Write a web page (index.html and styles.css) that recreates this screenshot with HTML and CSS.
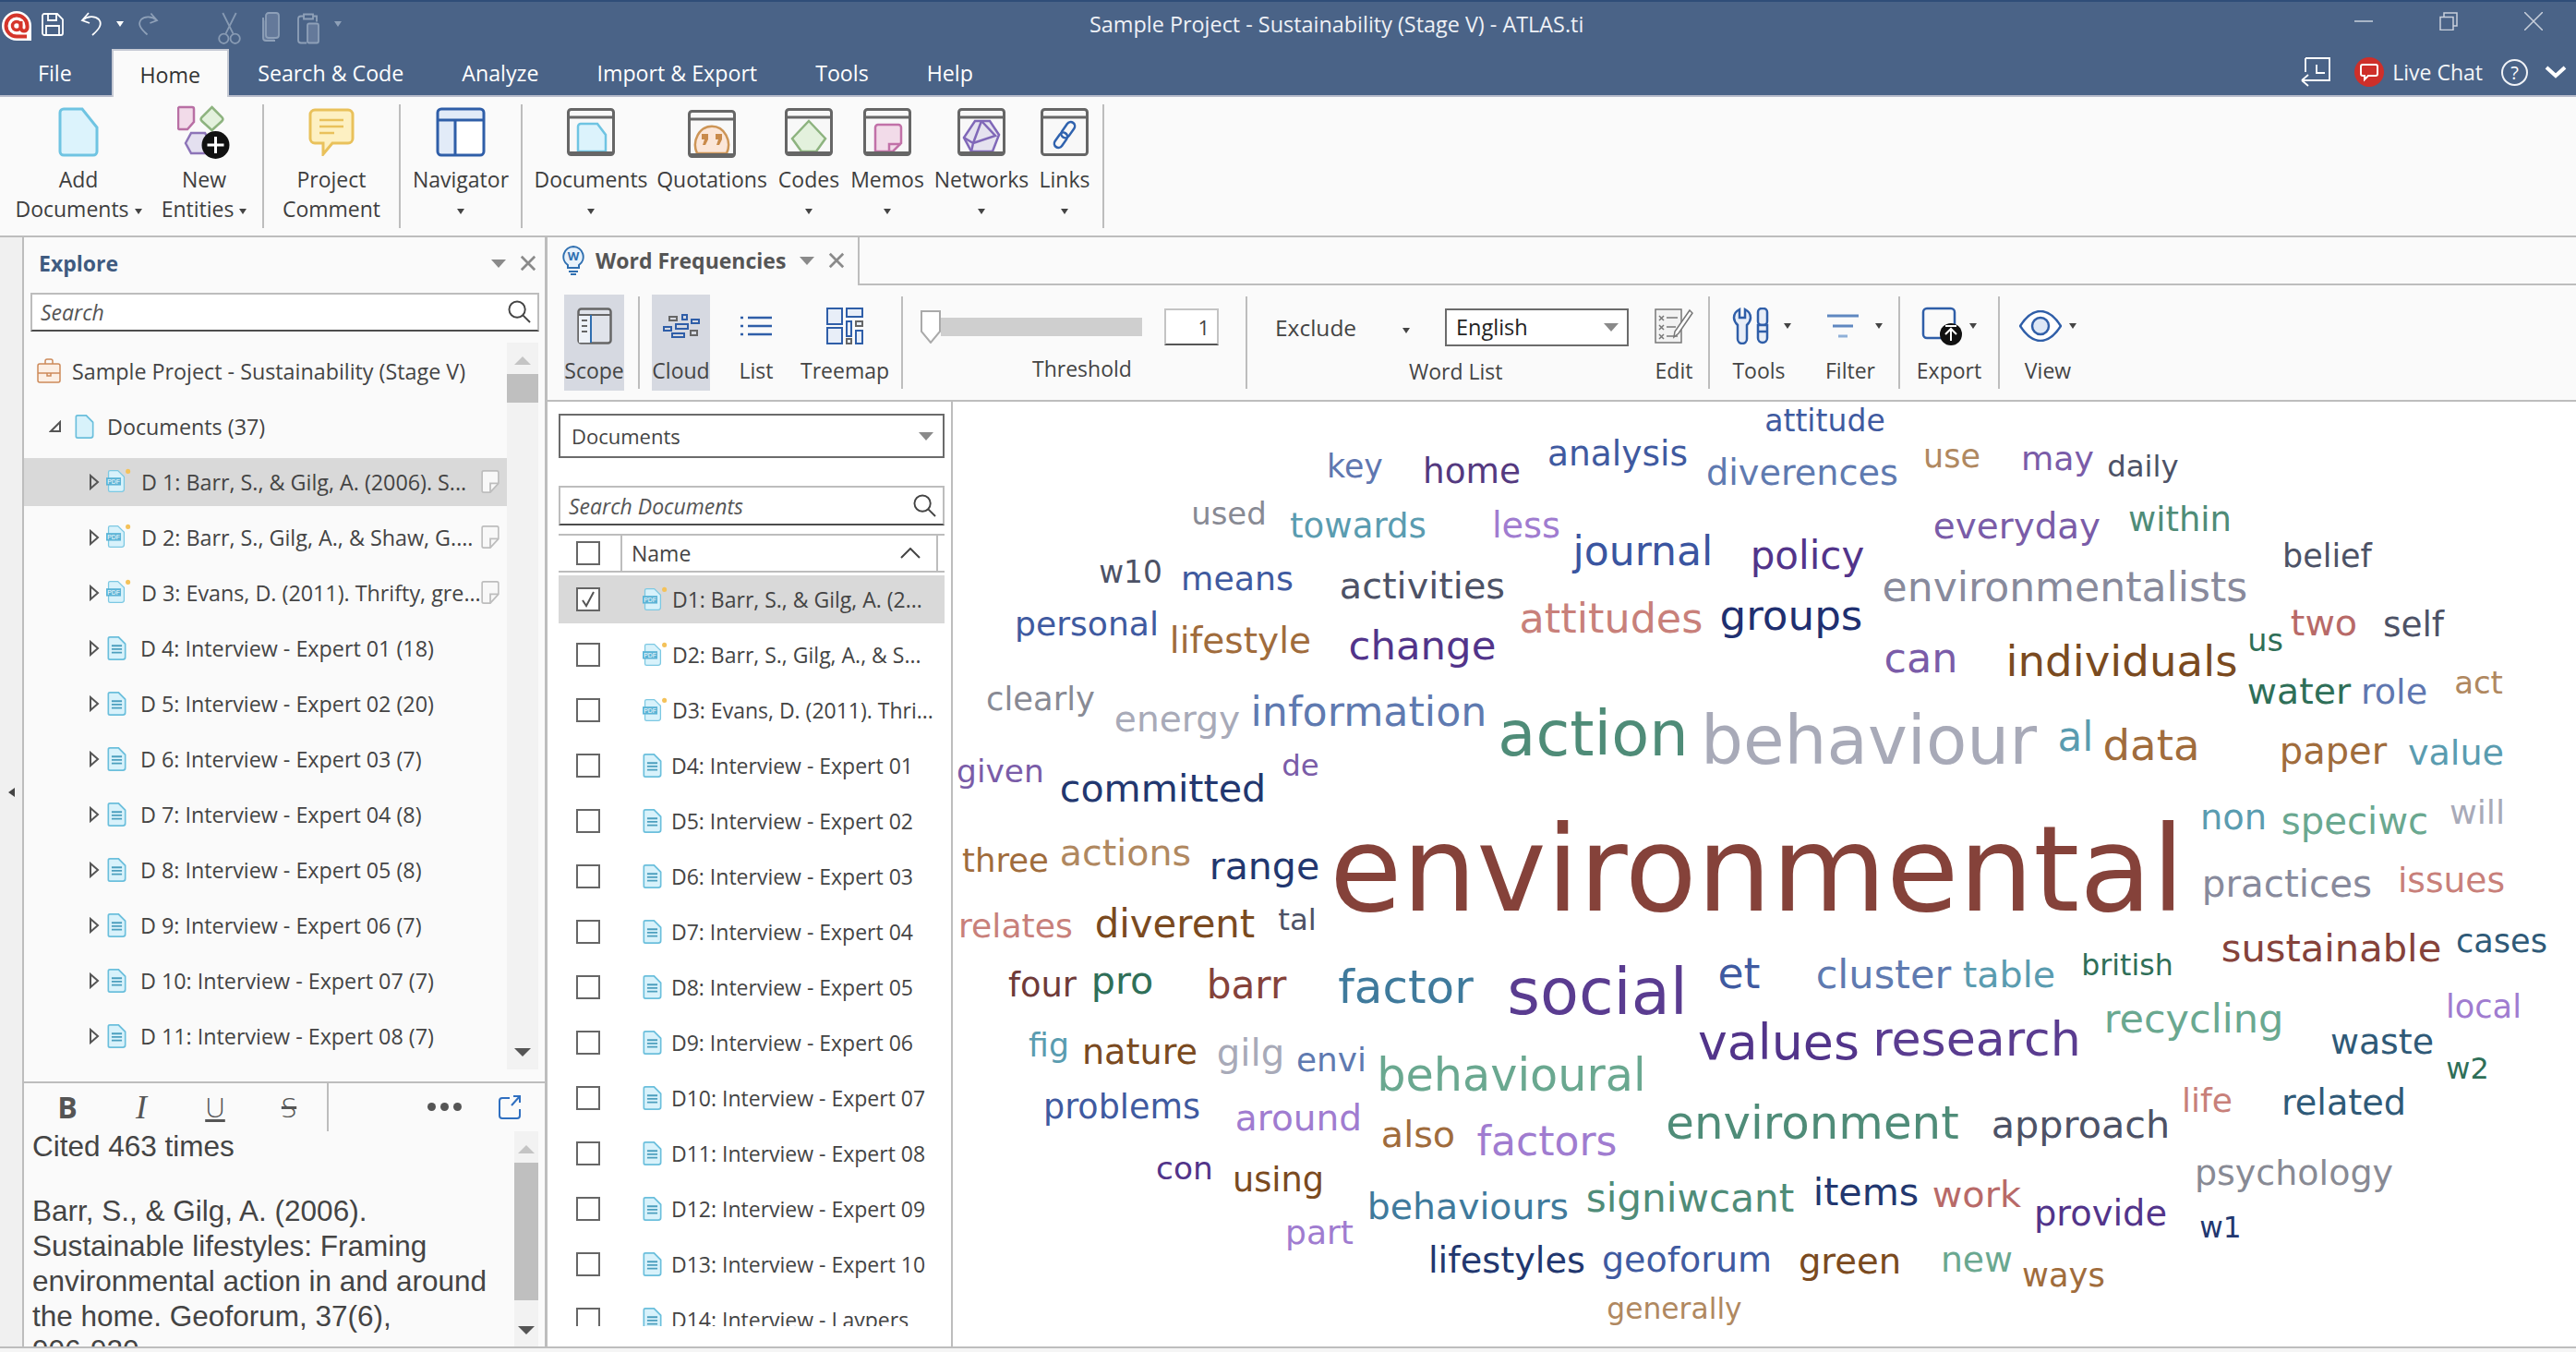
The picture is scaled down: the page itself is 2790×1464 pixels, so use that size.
FILE: index.html
```html
<!DOCTYPE html>
<html lang="en">
<head>
    <meta charset="UTF-8">
    <title>Sample Project - Sustainability (Stage V) - ATLAS.ti</title>
    <link rel="stylesheet" href="styles.css">
</head>
<body>
    <!-- shared icons -->
    <svg class="defs" aria-hidden="true">
        <symbol id="doc-big" viewBox="0 0 44 54"><path d="M6 2h20l16 20v26a4 4 0 0 1-4 4H6a4 4 0 0 1-4-4V6a4 4 0 0 1 4-4z" fill="#dcf3fc" stroke="#6fc4e2" stroke-width="3"/></symbol>
        <symbol id="doc-small" viewBox="0 0 22 28"><path d="M3 1h10l8 8v15a3 3 0 0 1-3 3H3a2 2 0 0 1-2-2V3a2 2 0 0 1 2-2z" fill="#d8f2fb" stroke="#6bbfdc" stroke-width="2"/></symbol>
        <symbol id="doc-text" viewBox="0 0 22 28"><path d="M3 1h10l8 8v15a3 3 0 0 1-3 3H3a2 2 0 0 1-2-2V3a2 2 0 0 1 2-2z" fill="#d8f2fb" stroke="#6bbfdc" stroke-width="2"/><path d="M5 11h12M5 15h12M5 19h12" stroke="#4c9fbe" stroke-width="2"/></symbol>
        <symbol id="doc-pdf" viewBox="0 0 32 32"><path d="M5 3h10l8 8v16a3 3 0 0 1-3 3H5a2 2 0 0 1-2-2V5a2 2 0 0 1 2-2z" fill="#d8f2fb" stroke="#7cc8e2" stroke-width="1.500"/><rect x="0" y="12" width="19" height="10" fill="#5cb4d6"/><text x="9.500" y="20.500" class="pdf-label">PDF</text><circle cx="28" cy="4" r="3" fill="#f4c25a"/></symbol>
        <symbol id="note" viewBox="0 0 22 28"><path d="M3 1h16a2 2 0 0 1 2 2v13l-10 11H3a2 2 0 0 1-2-2V3a2 2 0 0 1 2-2z" fill="#f8f8f8" stroke="#bdbdbd" stroke-width="2"/><path d="M21 16h-10v11" fill="none" stroke="#bdbdbd" stroke-width="2"/></symbol>
        <symbol id="loupe" viewBox="0 0 26 26"><circle cx="10.500" cy="10.500" r="9" fill="none" stroke="#444" stroke-width="2"/><path d="M17 17l8 8" stroke="#444" stroke-width="2"/></symbol>
        <symbol id="frame" viewBox="0 0 52 52"><rect x="1.500" y="1.500" width="49" height="49" rx="3" fill="#f8f8f8" stroke="#666" stroke-width="3"/><path d="M2 10h48" stroke="#666" stroke-width="3"/></symbol>
        <symbol id="tri" viewBox="0 0 11 18"><path d="M1 2l8 7-8 7z" fill="none" stroke="#555" stroke-width="2"/></symbol>
    </svg>

    <header class="titlebar">
        <div class="title-row">
            <div class="qat">
                <svg class="qat-logo" viewBox="0 0 32 32"><path d="M16 0a16 16 0 0 1 16 16v16H16A16 16 0 0 1 16 0z" fill="#fff"/><path d="M27 27.500H16A11.500 11.500 0 1 1 27.500 16v2a3.500 3.500 0 0 1-7 0v-7" fill="none" stroke="#d5352b" stroke-width="4"/><circle cx="16" cy="16" r="4.500" fill="none" stroke="#d5352b" stroke-width="3.500"/></svg>
                <svg class="qat-save" viewBox="0 0 24 25"><g fill="none" stroke="#fff" stroke-width="1.800"><path d="M3 1h14l6 6v15a2 2 0 0 1-2 2H3a2 2 0 0 1-2-2V3a2 2 0 0 1 2-2z"/><path d="M7 1v7h9V1M5 24V14h14v10"/></g></svg>
                <svg class="qat-undo" viewBox="0 0 24 26"><path d="M9 1L2 9l8 3M2 9c6-5 14-5 18-1 4 5 1 10-7 17" fill="none" stroke="#fff" stroke-width="1.800"/></svg>
                <span class="caret caret-white qat-caret"></span>
                <svg class="qat-redo" viewBox="0 0 24 26"><path d="M15 1l7 8-8 3M22 9c-6-5-14-5-18-1-4 5-1 10 7 17" fill="none" stroke="#8ea0b8" stroke-width="1.800"/></svg>
                <svg class="qat-cut" viewBox="0 0 24 34"><g fill="none" stroke="#8ea0b8" stroke-width="1.800"><circle cx="6" cy="28" r="5"/><circle cx="18" cy="28" r="5"/><path d="M8 23L19 1M16 23L5 1"/></g></svg>
                <svg class="qat-copy" viewBox="0 0 20 32"><g fill="#64799a" stroke="#8ea0b8" stroke-width="1.800"><path d="M2 6v22a3 3 0 0 0 3 3h10"/><rect x="5" y="1" width="14" height="27" rx="3"/></g></svg>
                <svg class="qat-paste" viewBox="0 0 24 34"><g fill="none" stroke="#8ea0b8" stroke-width="1.800"><path d="M8 4H4a3 3 0 0 0-3 3v23a3 3 0 0 0 3 3h6"/><path d="M7 2h10v5H7zM17 4h4v6"/></g><rect x="11" y="12" width="12" height="21" rx="2" fill="#64799a" stroke="#8ea0b8" stroke-width="1.800"/></svg>
                <span class="caret caret-dim qat-caret2"></span>
            </div>
            <div class="app-title">Sample Project - Sustainability (Stage V) - ATLAS.ti</div>
            <div class="win-buttons">
                <div class="win-btn"><svg viewBox="0 0 20 20"><path d="M0 10h20" stroke="#c9d0dc" stroke-width="1.500"/></svg></div>
                <div class="win-btn"><svg viewBox="0 0 20 20"><path d="M1 5.500h14v14H1zM5 5V1h14v14h-4" fill="none" stroke="#c9d0dc" stroke-width="1.500"/></svg></div>
                <div class="win-btn"><svg viewBox="0 0 20 20"><path d="M0 0l20 20M20 0L0 20" stroke="#c9d0dc" stroke-width="1.500"/></svg></div>
            </div>
        </div>
        <nav class="menu-row">
            <a class="tab tab-file">File</a>
            <a class="tab tab-active">Home</a>
            <a class="tab">Search &amp; Code</a>
            <a class="tab">Analyze</a>
            <a class="tab">Import &amp; Export</a>
            <a class="tab">Tools</a>
            <a class="tab">Help</a>
            <div class="menu-right">
                <svg class="back-icon" viewBox="0 0 32 32"><path d="M5 1h26v24H5M5 1v15M17 8v9h9M1 25h14M1 25l7-6M1 25l7 6" fill="none" stroke="#fff" stroke-width="1.800"/></svg>
                <svg class="chat-icon" viewBox="0 0 32 32"><circle cx="16" cy="16" r="16" fill="#ce2f2a"/><path d="M9 8h14a2 2 0 0 1 2 2v8a2 2 0 0 1-2 2h-8l-4 4v-4H9a2 2 0 0 1-2-2v-8a2 2 0 0 1 2-2z" fill="none" stroke="#fff" stroke-width="2"/></svg>
                <span class="chat-label">Live Chat</span>
                <span class="help-icon">?</span>
                <svg class="chevron" viewBox="0 0 24 14"><path d="M2 2l10 9 10-9" fill="none" stroke="#fff" stroke-width="4"/></svg>
            </div>
        </nav>
    </header>

    <section class="ribbon">
        <div class="rbtn rb-add">
            <div class="rbtn-icon"><svg class="ic-doc" viewBox="0 0 44 54"><use href="#doc-big"/></svg></div>
            <span>Add</span><span>Documents <i class="caret"></i></span>
        </div>
        <div class="rbtn rb-new">
            <div class="rbtn-icon">
                <svg class="ic-new" viewBox="0 0 58 58"><path d="M2 2h14a2 2 0 0 1 2 2v14l-7 8H2a2 2 0 0 1-1-2V4a2 2 0 0 1 1-2z" fill="#f2dbe9" stroke="#b86fa4" stroke-width="2.500"/><path d="M37.500 2l11 11a3 3 0 0 1 0 4l-11 10-11-10a3 3 0 0 1 0-4z" fill="#e3f1dd" stroke="#8db37f" stroke-width="2.500"/><path d="M9 41l6-11h15l6 11-6 11H15z" fill="#e4e0f0" stroke="#8d74b8" stroke-width="2.500"/><circle cx="41.500" cy="43" r="15" fill="#111"/><path d="M41.500 34v18M32.500 43h18" stroke="#fff" stroke-width="3"/></svg>
            </div>
            <span>New</span><span>Entities <i class="caret"></i></span>
        </div>
        <div class="rb-sep"></div>
        <div class="rbtn rb-comment">
            <div class="rbtn-icon">
                <svg class="ic-comment" viewBox="0 0 50 52"><path d="M7 2h36a5 5 0 0 1 5 5v26a5 5 0 0 1-5 5H26L16 50V38H7a5 5 0 0 1-5-5V7a5 5 0 0 1 5-5z" fill="#fdf0c2" stroke="#e9c15b" stroke-width="3"/><path d="M12 13h26M12 20h26M12 27h16" stroke="#e9c15b" stroke-width="2.500"/></svg>
            </div>
            <span>Project</span><span>Comment</span>
        </div>
        <div class="rb-sep rb-sep-flush"></div>
        <div class="rbtn rb-nav">
            <div class="rbtn-icon">
                <svg class="ic-nav" viewBox="0 0 54 54"><rect x="2" y="2" width="50" height="50" rx="4" fill="#fff"/><path d="M3 3h48v11H3zM3 14h18v37H3z" fill="#e2ebf8"/><rect x="2" y="2" width="50" height="50" rx="4" fill="none" stroke="#2f5ea8" stroke-width="3"/><path d="M2 14h50M21 14v38" stroke="#2f5ea8" stroke-width="3"/></svg>
            </div>
            <span>Navigator</span><span><i class="caret"></i></span>
        </div>
        <div class="rb-sep rb-sep-flush"></div>
        <div class="rbtn rb-docs">
            <div class="rbtn-icon">
                <svg class="ic-frame" viewBox="0 0 52 52"><use href="#frame"/><path d="M12 47V20a3 3 0 0 1 3-3h18l9 12v18z" fill="#dcf3fc" stroke="#6fc4e2" stroke-width="2.500"/><path d="M3 48.500h46" stroke="#666" stroke-width="3"/></svg>
            </div>
            <span>Documents</span><span><i class="caret"></i></span>
        </div>
        <div class="rbtn rb-quotes">
            <div class="rbtn-icon">
                <svg class="ic-frame ic-quotes" viewBox="0 0 52 52"><use href="#frame"/><path d="M10 47a18 20 0 1 1 32 0z" fill="#fbe6d8" stroke="#cd9556" stroke-width="2.500"/><g fill="#c98a4a"><path d="M15 26h7v6l-3 6h-3l2-6h-3zM30 26h7v6l-3 6h-3l2-6h-3z"/></g><path d="M3 48.500h46" stroke="#666" stroke-width="3"/></svg>
            </div>
            <span>Quotations</span><span>&nbsp;</span>
        </div>
        <div class="rbtn rb-codes">
            <div class="rbtn-icon">
                <svg class="ic-frame" viewBox="0 0 52 52"><use href="#frame"/><path d="M26 14l18 19-10 14H18L8 33z" fill="#e3f1dd" stroke="#8db37f" stroke-width="2.500"/><path d="M3 48.500h46" stroke="#666" stroke-width="3"/></svg>
            </div>
            <span>Codes</span><span><i class="caret"></i></span>
        </div>
        <div class="rbtn rb-memos">
            <div class="rbtn-icon">
                <svg class="ic-frame" viewBox="0 0 52 52"><use href="#frame"/><path d="M13 47V21a3 3 0 0 1 3-3h22a3 3 0 0 1 3 3v17l-9 9z" fill="#f2dbe9" stroke="#c171a8" stroke-width="2.500"/><path d="M28 47v-8h13" fill="none" stroke="#c171a8" stroke-width="2.500"/><path d="M3 48.500h46" stroke="#666" stroke-width="3"/></svg>
            </div>
            <span>Memos</span><span><i class="caret"></i></span>
        </div>
        <div class="rbtn rb-networks">
            <div class="rbtn-icon">
                <svg class="ic-frame" viewBox="0 0 52 52"><use href="#frame"/><path d="M19 14h16l10 15-7 18H15L7 32z" fill="#e5e2ef" stroke="#8068b8" stroke-width="2.500"/><path d="M26 14l15 16-24 8M7 32l10 6-2 9M26 14l-9 24" fill="none" stroke="#8068b8" stroke-width="2.500"/><path d="M3 48.500h46" stroke="#666" stroke-width="3"/></svg>
            </div>
            <span>Networks</span><span><i class="caret"></i></span>
        </div>
        <div class="rbtn rb-links">
            <div class="rbtn-icon">
                <svg class="ic-frame" viewBox="0 0 52 52"><use href="#frame"/><g fill="none" stroke="#2f62ae" stroke-width="2.500" transform="rotate(35 26 29)"><rect x="21.500" y="13" width="9" height="19" rx="4.500"/><rect x="21.500" y="27" width="9" height="18" rx="4.500"/></g></svg>
            </div>
            <span>Links</span><span><i class="caret"></i></span>
        </div>
        <div class="rb-sep rb-sep-last"></div>
    </section>

    <main class="workspace">
        <div class="side-strip"><span class="strip-arrow"></span></div>

        <aside class="explore">
            <div class="panel-head">
                <span class="explore-title">Explore</span>
                <span class="caret caret-panel"></span>
                <svg class="panel-x" viewBox="0 0 20 20"><path d="M2 2l16 16M18 2L2 18" stroke="#8a8a8a" stroke-width="3"/></svg>
            </div>
            <div class="searchbox explore-search">
                <em>Search</em>
                <svg class="loupe" viewBox="0 0 26 26"><use href="#loupe"/></svg>
            </div>
            <div class="tree">
                <div class="tree-list">
                    <div class="tree-row tree-project">
                        <svg class="ic-case" viewBox="0 0 26 27"><path d="M9 6V3a2 2 0 0 1 2-2h4a2 2 0 0 1 2 2v3" fill="none" stroke="#cd8a5a" stroke-width="1.500"/><rect x="1" y="6" width="24" height="20" rx="2" fill="#fcefe4" stroke="#cd8a5a" stroke-width="1.500"/><path d="M1 16h24M11 16v3h4v-3" fill="none" stroke="#cd8a5a" stroke-width="1.500"/></svg>
                        <span>Sample Project - Sustainability (Stage V)</span>
                    </div>
                    <div class="tree-row tree-docs">
                        <svg class="tri-open" viewBox="0 0 14 14"><path d="M12 2v10H2z" fill="none" stroke="#555" stroke-width="2"/></svg>
                        <svg class="ic-small" viewBox="0 0 22 28"><use href="#doc-small"/></svg>
                        <span>Documents (37)</span>
                    </div>
                    <div class="tree-row tree-doc is-selected"><svg class="tri" viewBox="0 0 11 18"><use href="#tri"/></svg><svg class="ic-pdf" viewBox="0 0 32 32"><use href="#doc-pdf"/></svg><span>D 1: Barr, S., &amp; Gilg, A. (2006). S...</span><svg class="ic-note" viewBox="0 0 22 28"><use href="#note"/></svg></div>
                    <div class="tree-row tree-doc"><svg class="tri" viewBox="0 0 11 18"><use href="#tri"/></svg><svg class="ic-pdf" viewBox="0 0 32 32"><use href="#doc-pdf"/></svg><span>D 2: Barr, S., Gilg, A., &amp; Shaw, G....</span><svg class="ic-note" viewBox="0 0 22 28"><use href="#note"/></svg></div>
                    <div class="tree-row tree-doc"><svg class="tri" viewBox="0 0 11 18"><use href="#tri"/></svg><svg class="ic-pdf" viewBox="0 0 32 32"><use href="#doc-pdf"/></svg><span>D 3: Evans, D. (2011). Thrifty, gre...</span><svg class="ic-note" viewBox="0 0 22 28"><use href="#note"/></svg></div>
                    <div class="tree-row tree-doc"><svg class="tri" viewBox="0 0 11 18"><use href="#tri"/></svg><svg class="ic-text" viewBox="0 0 22 28"><use href="#doc-text"/></svg><span>D 4: Interview - Expert 01 (18)</span></div>
                    <div class="tree-row tree-doc"><svg class="tri" viewBox="0 0 11 18"><use href="#tri"/></svg><svg class="ic-text" viewBox="0 0 22 28"><use href="#doc-text"/></svg><span>D 5: Interview - Expert 02 (20)</span></div>
                    <div class="tree-row tree-doc"><svg class="tri" viewBox="0 0 11 18"><use href="#tri"/></svg><svg class="ic-text" viewBox="0 0 22 28"><use href="#doc-text"/></svg><span>D 6: Interview - Expert 03 (7)</span></div>
                    <div class="tree-row tree-doc"><svg class="tri" viewBox="0 0 11 18"><use href="#tri"/></svg><svg class="ic-text" viewBox="0 0 22 28"><use href="#doc-text"/></svg><span>D 7: Interview - Expert 04 (8)</span></div>
                    <div class="tree-row tree-doc"><svg class="tri" viewBox="0 0 11 18"><use href="#tri"/></svg><svg class="ic-text" viewBox="0 0 22 28"><use href="#doc-text"/></svg><span>D 8: Interview - Expert 05 (8)</span></div>
                    <div class="tree-row tree-doc"><svg class="tri" viewBox="0 0 11 18"><use href="#tri"/></svg><svg class="ic-text" viewBox="0 0 22 28"><use href="#doc-text"/></svg><span>D 9: Interview - Expert 06 (7)</span></div>
                    <div class="tree-row tree-doc"><svg class="tri" viewBox="0 0 11 18"><use href="#tri"/></svg><svg class="ic-text" viewBox="0 0 22 28"><use href="#doc-text"/></svg><span>D 10: Interview - Expert 07 (7)</span></div>
                    <div class="tree-row tree-doc"><svg class="tri" viewBox="0 0 11 18"><use href="#tri"/></svg><svg class="ic-text" viewBox="0 0 22 28"><use href="#doc-text"/></svg><span>D 11: Interview - Expert 08 (7)</span></div>
                </div>
                <div class="scrollbar tree-scroll">
                    <i class="sb-up"></i><b class="sb-thumb"></b><i class="sb-down"></i>
                </div>
            </div>
            <div class="note-bar">
                <span class="fmt fmt-b">B</span>
                <span class="fmt fmt-i">I</span>
                <span class="fmt fmt-u">U</span>
                <span class="fmt fmt-s">S</span>
                <div class="note-sep"></div>
                <span class="note-dots"><i></i><i></i><i></i></span>
                <svg class="note-open" viewBox="0 0 24 26"><path d="M12 3H4a3 3 0 0 0-3 3v16a3 3 0 0 0 3 3h16a3 3 0 0 0 3-3v-7M16 1h7v7M23 1l-9 10" fill="none" stroke="#2f6fc0" stroke-width="2"/></svg>
            </div>
            <div class="note-body">
                <div class="note-text">
                    <p class="note-cited">Cited 463 times</p>
                    <p>Barr, S., &amp; Gilg, A. (2006).<br>Sustainable lifestyles: Framing<br>environmental action in and around<br>the home. Geoforum, 37(6),<br>906-920.</p>
                </div>
                <div class="scrollbar note-scroll">
                    <i class="sb-up"></i><b class="sb-thumb"></b><i class="sb-down"></i>
                </div>
            </div>
        </aside>

        <section class="main-panel">
            <div class="doc-tabs">
                <div class="doc-tab">
                    <svg class="ic-bulb" viewBox="0 0 24 32"><path d="M12 1a11 11 0 0 0-6 20v3h12v-3a11 11 0 0 0-6-20z" fill="#e8f2fb" stroke="#2f6fb0" stroke-width="2"/><path d="M7 28h10M9 31h6" stroke="#2f6fb0" stroke-width="2"/><text x="12" y="16" class="bulb-label">W</text></svg>
                    <span class="doc-tab-label">Word Frequencies</span>
                    <span class="caret caret-panel"></span>
                    <svg class="panel-x" viewBox="0 0 20 20"><path d="M2 2l16 16M18 2L2 18" stroke="#8a8a8a" stroke-width="3"/></svg>
                </div>
                <div class="doc-tabs-fill"></div>
            </div>

            <div class="toolbar">
                <div class="tool tool-active tool-scope">
                    <div class="tool-icon"><svg class="ic-scope" viewBox="0 0 38 40"><rect x="1.500" y="1.500" width="35" height="37" rx="3" fill="#e0e3ea" stroke="#666" stroke-width="2.500"/><path d="M2 8h12v30H2z" fill="#eef2f8"/><path d="M2 8h34" stroke="#666" stroke-width="2"/><path d="M15 8v30" stroke="#2f6fb0" stroke-width="2"/><path d="M5 14h6M5 20h6M5 26h6" stroke="#666" stroke-width="2"/></svg></div>
                    <span>Scope</span>
                </div>
                <div class="tool-sep tool-sep-first"></div>
                <div class="tool tool-active tool-cloud">
                    <div class="tool-icon"><svg class="ic-cloud" viewBox="0 0 40 26"><g fill="none" stroke-width="2"><rect x="7" y="3" width="8" height="4" stroke="#666"/><rect x="21" y="1" width="5" height="5" stroke="#2f5ea8"/><rect x="31" y="6" width="8" height="4" stroke="#2f5ea8"/><rect x="1" y="14" width="8" height="4" stroke="#2f5ea8"/><rect x="14" y="11" width="13" height="5" stroke="#2f5ea8"/><rect x="30" y="18" width="7" height="5" stroke="#666"/><rect x="10" y="21" width="13" height="4" stroke="#2f5ea8"/></g></svg></div>
                    <span>Cloud</span>
                </div>
                <div class="tool tool-list">
                    <div class="tool-icon"><svg class="ic-list" viewBox="0 0 34 22"><path d="M0 2h3M0 11h3M0 20h3M8 2h26M8 11h26M8 20h26" stroke="#2f5ea8" stroke-width="2.500"/></svg></div>
                    <span>List</span>
                </div>
                <div class="tool tool-treemap">
                    <div class="tool-icon"><svg class="ic-treemap" viewBox="0 0 40 40"><g fill="#e8eef8" stroke="#2f5ea8" stroke-width="2"><rect x="1" y="1" width="16" height="17"/><rect x="22" y="1" width="17" height="9"/><rect x="1" y="22" width="16" height="17"/><rect x="22" y="15" width="5" height="16"/><rect x="32" y="15" width="7" height="5" stroke="#666"/><rect x="32" y="25" width="7" height="14"/><rect x="22" y="34" width="5" height="5" stroke="#666"/></g></svg></div>
                    <span>Treemap</span>
                </div>
                <div class="tool-sep tool-sep-gap"></div>
                <div class="threshold">
                    <div class="threshold-top">
                        <div class="slider">
                            <svg class="slider-thumb" viewBox="0 0 22 36"><path d="M1 1h20v22l-10 12L1 23z" fill="#fff" stroke="#aaa" stroke-width="2"/></svg>
                            <div class="slider-track"></div>
                        </div>
                        <div class="threshold-input">1</div>
                    </div>
                    <span class="threshold-label">Threshold</span>
                </div>
                <div class="tool-sep"></div>
                <div class="wordlist">
                    <div class="wordlist-top">
                        <span class="exclude">Exclude</span>
                        <i class="caret exclude-caret"></i>
                        <div class="lang-select"><span>English</span><i class="caret caret-panel"></i></div>
                    </div>
                    <span class="wordlist-label">Word List</span>
                </div>
                <div class="tool tool-edit">
                    <div class="tool-icon"><svg class="ic-edit" viewBox="0 0 42 38"><rect x="1" y="1" width="28" height="36" fill="#f2f2f2" stroke="#777" stroke-width="1.500"/><path d="M5 8l5 5M10 8l-5 5M5 18l5 5M10 18l-5 5M5 28l5 5M10 28l-5 5M13 10h12M13 20h10M13 30h12" stroke="#777" stroke-width="1.500"/><path d="M38 2l3 3-15 22-5 4 1-6z" fill="#fff" stroke="#777" stroke-width="1.500"/></svg></div>
                    <span>Edit</span>
                </div>
                <div class="tool-sep"></div>
                <div class="tool tool-tools">
                    <div class="tool-icon"><svg class="ic-tools" viewBox="0 0 42 40"><g fill="#e8eef8" stroke="#2f5ea8" stroke-width="2.500"><path d="M8 2v9h6V2c4 2 6 5 6 9 0 4-2 6-4 8v15a5 5 0 0 1-10 0V19c-2-2-4-4-4-8 0-4 2-7 6-9z"/><rect x="28" y="1" width="10" height="18" rx="4"/><path d="M28 19h10v14a5 5 0 0 1-10 0zM28 26h10"/></g></svg><i class="caret"></i></div>
                    <span>Tools</span>
                </div>
                <div class="tool tool-filter">
                    <div class="tool-icon"><svg class="ic-filter" viewBox="0 0 34 26"><path d="M0 2h34" stroke="#5f87c0" stroke-width="3"/><path d="M6 13h22" stroke="#5f87c0" stroke-width="3"/><path d="M12 24h10" stroke="#8fb0d8" stroke-width="3"/></svg><i class="caret"></i></div>
                    <span>Filter</span>
                </div>
                <div class="tool-sep"></div>
                <div class="tool tool-export">
                    <div class="tool-icon"><svg class="ic-export" viewBox="0 0 44 42"><path d="M36 22V6a4 4 0 0 0-4-4H6a4 4 0 0 0-4 4v24a4 4 0 0 0 4 4h24" fill="none" stroke="#2f5ea8" stroke-width="2.500"/><circle cx="32" cy="30" r="12" fill="#111"/><path d="M32 37V25M26 30l6-6 6 6M26 21h12" fill="none" stroke="#fff" stroke-width="2"/></svg><i class="caret"></i></div>
                    <span>Export</span>
                </div>
                <div class="tool-sep"></div>
                <div class="tool tool-view">
                    <div class="tool-icon"><svg class="ic-view" viewBox="0 0 46 34"><path d="M1 17C8 6 15 1 23 1s15 5 22 16c-7 11-14 16-22 16S8 28 1 17z" fill="#fff" stroke="#2f5ea8" stroke-width="2.500"/><circle cx="23" cy="17" r="9" fill="#dde7f6" stroke="#2f5ea8" stroke-width="2.500"/></svg><i class="caret"></i></div>
                    <span>View</span>
                </div>
            </div>

            <div class="content">
                <div class="scope-col">
                    <div class="scope-select"><span>Documents</span><i class="caret caret-panel"></i></div>
                    <div class="searchbox scope-search">
                        <em>Search Documents</em>
                        <svg class="loupe" viewBox="0 0 26 26"><use href="#loupe"/></svg>
                    </div>
                    <div class="list-head">
                        <div class="list-head-check"><i class="check"></i></div>
                        <div class="list-head-name"><span>Name</span><svg class="sort-up" viewBox="0 0 22 12"><path d="M1 11l10-10 10 10" fill="none" stroke="#444" stroke-width="2"/></svg></div>
                    </div>
                    <div class="doc-list">
                        <div class="doc-row is-selected"><i class="check is-checked"><svg viewBox="0 0 16 18"><path d="M2 10l4 6 8-15" fill="none" stroke="#555" stroke-width="2"/></svg></i><svg class="ic-pdf" viewBox="0 0 32 32"><use href="#doc-pdf"/></svg><span>D1: Barr, S., &amp; Gilg, A. (2...</span></div>
                        <div class="doc-row"><i class="check"></i><svg class="ic-pdf" viewBox="0 0 32 32"><use href="#doc-pdf"/></svg><span>D2: Barr, S., Gilg, A., &amp; S...</span></div>
                        <div class="doc-row"><i class="check"></i><svg class="ic-pdf" viewBox="0 0 32 32"><use href="#doc-pdf"/></svg><span>D3: Evans, D. (2011). Thri...</span></div>
                        <div class="doc-row"><i class="check"></i><svg class="ic-text" viewBox="0 0 22 28"><use href="#doc-text"/></svg><span>D4: Interview - Expert 01</span></div>
                        <div class="doc-row"><i class="check"></i><svg class="ic-text" viewBox="0 0 22 28"><use href="#doc-text"/></svg><span>D5: Interview - Expert 02</span></div>
                        <div class="doc-row"><i class="check"></i><svg class="ic-text" viewBox="0 0 22 28"><use href="#doc-text"/></svg><span>D6: Interview - Expert 03</span></div>
                        <div class="doc-row"><i class="check"></i><svg class="ic-text" viewBox="0 0 22 28"><use href="#doc-text"/></svg><span>D7: Interview - Expert 04</span></div>
                        <div class="doc-row"><i class="check"></i><svg class="ic-text" viewBox="0 0 22 28"><use href="#doc-text"/></svg><span>D8: Interview - Expert 05</span></div>
                        <div class="doc-row"><i class="check"></i><svg class="ic-text" viewBox="0 0 22 28"><use href="#doc-text"/></svg><span>D9: Interview - Expert 06</span></div>
                        <div class="doc-row"><i class="check"></i><svg class="ic-text" viewBox="0 0 22 28"><use href="#doc-text"/></svg><span>D10: Interview - Expert 07</span></div>
                        <div class="doc-row"><i class="check"></i><svg class="ic-text" viewBox="0 0 22 28"><use href="#doc-text"/></svg><span>D11: Interview - Expert 08</span></div>
                        <div class="doc-row"><i class="check"></i><svg class="ic-text" viewBox="0 0 22 28"><use href="#doc-text"/></svg><span>D12: Interview - Expert 09</span></div>
                        <div class="doc-row"><i class="check"></i><svg class="ic-text" viewBox="0 0 22 28"><use href="#doc-text"/></svg><span>D13: Interview - Expert 10</span></div>
                        <div class="doc-row"><i class="check"></i><svg class="ic-text" viewBox="0 0 22 28"><use href="#doc-text"/></svg><span>D14: Interview - Laypers</span></div>
                    </div>
                </div>
                <div class="cloud" id="cloud"></div>
            </div>
        </section>
    </main>

    <script src="cloud.js"></script>
</body>
</html>
```
FILE: styles.css
```css
* {
    box-sizing: border-box;
}

body {
    margin: 0;
    width: 2790px;
    height: 1464px;
    overflow: hidden;
    background: #f5f5f5;
    font-family: "Open Sans", sans-serif;
    font-size: 23px;
    color: #444;
}

i, em {
    font-style: normal;
}

p {
    margin: 0;
}

svg {
    display: block;
    flex: none;
}

.defs {
    display: none;
}

.pdf-label {
    font-family: "Liberation Sans", sans-serif;
    font-size: 8px;
    fill: #fff;
    text-anchor: middle;
}

.bulb-label {
    font-family: "Open Sans", sans-serif;
    font-size: 13px;
    font-weight: 700;
    fill: #2f6fb0;
    text-anchor: middle;
}

/* carets */
.caret {
    display: inline-block;
    width: 0;
    height: 0;
    border-left: 4px solid transparent;
    border-right: 4px solid transparent;
    border-top: 6px solid #444;
    vertical-align: middle;
}

.caret-white { border-top-color: #fff; }
.caret-dim { border-top-color: #8ea0b8; }

.caret-panel {
    border-left-width: 8px;
    border-right-width: 8px;
    border-top-width: 9px;
    border-top-color: #8a8a8a;
}

/* title bar */
.titlebar {
    height: 105px;
    background: #4a6387;
    border-top: 2px solid #2f4d78;
    border-bottom: 2px solid #b8bccb;
    color: #fff;
}

.title-row {
    height: 49px;
    display: flex;
    align-items: center;
}

.qat {
    width: 1180px;
    height: 49px;
    display: flex;
    align-items: flex-start;
}

.qat-logo { width: 32px; height: 32px; margin: 10px 0 0 2px; }
.qat-save { width: 24px; height: 25px; margin: 12px 0 0 11px; }
.qat-undo { width: 24px; height: 26px; margin: 11px 0 0 18px; }
.qat-caret { margin: 21px 0 0 15px; }
.qat-redo { width: 23px; height: 26px; margin: 11px 0 0 15px; }
.qat-cut { width: 25px; height: 35px; margin: 11px 0 0 64px; opacity: .9; }
.qat-copy { width: 20px; height: 32px; margin: 11px 0 0 22px; }
.qat-paste { width: 24px; height: 35px; margin: 11px 0 0 19px; }
.qat-caret2 { margin: 21px 0 0 16px; }

.app-title {
    font-size: 23.400px;
    color: #eef1f6;
    margin-top: -2px;
}

.win-buttons {
    margin-left: auto;
    display: flex;
}

.win-btn {
    width: 92px;
    height: 49px;
    display: flex;
    align-items: center;
    justify-content: center;
    padding-bottom: 8px;
}

.win-btn svg {
    width: 20px;
    height: 20px;
}

.menu-row {
    height: 52px;
    display: flex;
    padding-left: 9px;
    font-size: 23.200px;
}

.tab {
    height: 52px;
    padding: 0 31.500px;
    line-height: 52px;
    margin-top: 2px;
    white-space: nowrap;
}

.tab-file {
    padding-left: 32px;
    padding-right: 0;
}

.tab-active {
    margin-left: 43px;
    width: 127px;
    padding: 0;
    text-align: center;
    color: #333;
    background: #fafafa;
    border: 2px solid #c6cad4;
    border-bottom: 0;
}

.menu-right {
    margin-left: auto;
    display: flex;
    align-items: center;
    padding-right: 10px;
    padding-top: 2px;
}

.back-icon { width: 32px; height: 32px; }
.chat-icon { width: 32px; height: 32px; margin-left: 26px; }

.chat-label {
    margin-left: 9px;
    font-size: 23px;
    color: #f3f5f8;
}

.help-icon {
    width: 29px;
    height: 29px;
    margin-left: 20px;
    border: 2px solid #f0f2f6;
    border-radius: 50%;
    font-size: 20px;
    line-height: 25px;
    text-align: center;
}

.chevron { width: 24px; height: 14px; margin-left: 18px; }

/* ribbon */
.ribbon {
    height: 152px;
    background: #fafafa;
    border-bottom: 2px solid #bdbdbd;
    display: flex;
}

.rbtn {
    display: flex;
    flex-direction: column;
    align-items: center;
    flex: none;
    color: #3e3e3e;
    line-height: 32px;
    white-space: nowrap;
}

.rbtn > span {
    height: 32px;
}

.rbtn-icon {
    height: 73px;
    display: flex;
    align-items: center;
    padding-top: 3px;
}

.rb-add { width: 170px; }
.rb-new { width: 102px; }
.rb-comment { width: 146px; }
.rb-nav { width: 130px; }
.rb-docs { width: 148px; }
.rb-quotes { width: 114px; }
.rb-codes { width: 96px; }
.rb-memos { width: 74px; }
.rb-networks { width: 130px; }
.rb-links { width: 50px; }

.rb-sep {
    width: 2px;
    height: 134px;
    margin: 8px 0 0 12px;
    background: #bdbdbd;
    flex: none;
}

.rb-sep-flush { margin-left: 0; }
.rb-sep-last { margin-left: 16px; }

.ic-doc { width: 44px; height: 54px; }
.ic-new { width: 58px; height: 58px; }
.ic-comment { width: 50px; height: 52px; }
.ic-nav { width: 54px; height: 54px; }
.ic-frame { width: 52px; height: 52px; }
.ic-quotes { margin-top: 3px; }

/* panels */
.workspace {
    height: 1203px;
    display: flex;
    border-bottom: 2px solid #bdbdbd;
    background: #fafafa;
}

.side-strip {
    width: 24px;
    background: #f0f0f0;
    display: flex;
    align-items: center;
    justify-content: center;
    flex: none;
}

.strip-arrow {
    border-top: 5px solid transparent;
    border-bottom: 5px solid transparent;
    border-right: 7px solid #444;
}

.explore {
    width: 568px;
    flex: none;
    border-left: 2px solid #bdbdbd;
    border-right: 2px solid #bdbdbd;
    display: flex;
    flex-direction: column;
}

.panel-head {
    height: 60px;
    display: flex;
    align-items: center;
    padding: 0 9px 3px 16px;
}

.explore-title {
    font-weight: 700;
    font-size: 23px;
    color: #3f5b80;
}

.panel-head .caret-panel {
    margin-left: auto;
}

.panel-x {
    width: 18px;
    height: 18px;
    margin-left: 15px;
}

.searchbox {
    display: flex;
    align-items: center;
    justify-content: space-between;
    background: #fff;
    border: 2px solid #bdbdbd;
    border-bottom-color: #4c4c4c;
    font-size: 23px;
    color: #555;
}

.searchbox em {
    font-style: italic;
}

.loupe {
    width: 25px;
    height: 25px;
}

.explore-search {
    height: 42px;
    margin: 0 6px 0 7px;
    padding: 0 7px 0 9px;
}

.tree {
    height: 787px;
    margin-top: 12px;
    margin-right: 6px;
    display: flex;
}

.tree-list {
    width: 523px;
    padding-top: 5px;
}

.tree-row {
    height: 52px;
    margin-bottom: 8px;
    display: flex;
    align-items: center;
    font-size: 23.300px;
    color: #444;
    white-space: nowrap;
}

.tree-project { padding-left: 14px; }
.tree-project span { margin-left: 12px; }
.ic-case { width: 26px; height: 27px; }

.tree-docs { padding-left: 27px; }
.tree-docs span { margin-left: 14px; }

.tri-open {
    width: 14px;
    height: 14px;
    margin-right: 14px;
}

.ic-small { width: 21px; height: 26px; }

.tree-doc { padding-left: 71px; }
.tree-doc span { margin-left: 14px; }

.tri {
    width: 11px;
    height: 18px;
    margin-right: 7px;
}

.ic-pdf { width: 27px; height: 27px; margin-top: -2px; margin-right: -3px; }
.ic-text { width: 21px; height: 26px; margin-left: 1px; margin-right: 1px; }

.ic-note {
    width: 20px;
    height: 25px;
    margin-left: auto;
    margin-right: 8px;
}

.is-selected {
    background: #d9d9d9;
}

.scrollbar {
    background: #f2f2f2;
    display: flex;
    flex-direction: column;
    align-items: center;
    flex: none;
}

.sb-up {
    width: 0;
    height: 0;
    margin-top: 15px;
    border-left: 9px solid transparent;
    border-right: 9px solid transparent;
    border-bottom: 9px solid #c4c4c4;
}

.sb-thumb {
    width: 100%;
    background: #bfbfbf;
}

.sb-down {
    width: 0;
    height: 0;
    margin-top: auto;
    margin-bottom: 14px;
    border-left: 9px solid transparent;
    border-right: 9px solid transparent;
    border-top: 9px solid #555;
}

.tree-scroll {
    width: 34px;
    height: 787px;
}

.tree-scroll .sb-thumb {
    height: 31px;
    margin-top: 10px;
}

.note-bar {
    height: 54px;
    margin-top: 13px;
    border-top: 2px solid #bdbdbd;
    display: flex;
    align-items: center;
    padding-left: 7px;
}

.fmt {
    width: 80px;
    text-align: center;
    color: #555;
    line-height: 52px;
    font-size: 30px;
}

.fmt-b { font-weight: 700; font-size: 32px; }
.fmt-i { font-family: "Liberation Serif", serif; font-style: italic; font-size: 36px; }
.fmt-u { text-decoration: underline; font-weight: 300; }
.fmt-s { text-decoration: line-through; font-weight: 300; }

.note-sep {
    width: 2px;
    height: 52px;
    background: #bdbdbd;
    margin-left: 1px;
}

.note-dots {
    margin-left: 107px;
    display: flex;
    gap: 5px;
}

.note-dots i {
    width: 9px;
    height: 9px;
    border-radius: 50%;
    background: #555;
}

.note-open {
    width: 24px;
    height: 26px;
    margin-left: 40px;
}

.note-body {
    height: 234px;
    display: flex;
    overflow: hidden;
}

.note-text {
    width: 531px;
    padding-left: 9px;
    margin-top: -2px;
    font-family: "Liberation Sans", Arial, sans-serif;
    font-size: 31.500px;
    line-height: 37.700px;
    color: #444;
    white-space: nowrap;
}

.note-cited {
    margin-bottom: 33px;
}

.note-scroll {
    width: 26px;
    height: 234px;
}

.note-scroll .sb-thumb {
    height: 149px;
    margin-top: 10px;
}

/* main panel */
.main-panel {
    flex: 1;
    min-width: 0;
    display: flex;
    flex-direction: column;
    border-left: 1px solid #bdbdbd;
}

.doc-tabs {
    height: 52px;
    display: flex;
}

.doc-tab {
    width: 338px;
    border-right: 2px solid #bdbdbd;
    display: flex;
    align-items: center;
    padding: 0 14px 2px 16px;
}

.ic-bulb {
    width: 24px;
    height: 32px;
}

.doc-tab-label {
    margin-left: 12px;
    font-weight: 700;
    font-size: 23px;
    color: #555;
}

.doc-tab .caret-panel {
    margin-left: auto;
}

.doc-tabs-fill {
    flex: 1;
    border-bottom: 2px solid #bdbdbd;
}

.toolbar {
    height: 126px;
    padding: 10px 0 0 18px;
    display: flex;
    border-bottom: 2px solid #bdbdbd;
    color: #444;
}

.tool {
    height: 104px;
    display: flex;
    flex-direction: column;
    align-items: center;
    flex: none;
    white-space: nowrap;
}

.tool > span {
    line-height: 38px;
}

.tool-icon {
    height: 63px;
    display: flex;
    align-items: center;
    gap: 8px;
    padding-top: 4px;
}

.tool-active { background: #d6d9e1; }
.tool-scope { width: 65px; }
.tool-cloud { width: 63px; }
.tool-list { width: 100px; }
.tool-treemap { width: 92px; }
.tool-edit { width: 58px; margin-right: 8px; }
.tool-tools { width: 106px; }
.tool-filter { width: 92px; margin-right: 6px; }
.tool-export { width: 106px; }
.tool-view { width: 104px; }

.tool-tools .tool-icon { gap: 14px; padding-left: 6px; }
.tool-filter .tool-icon { gap: 18px; padding-left: 10px; }

.tool-sep {
    width: 2px;
    height: 100px;
    margin-top: 2px;
    background: #bdbdbd;
    flex: none;
}

.tool-sep-first { margin-left: 15px; margin-right: 13px; }
.tool-sep-gap { margin-left: 15px; }

.ic-scope { width: 38px; height: 40px; }
.ic-cloud { width: 40px; height: 26px; }
.ic-list { width: 34px; height: 22px; }
.ic-treemap { width: 40px; height: 40px; }
.ic-edit { width: 42px; height: 38px; }
.ic-tools { width: 42px; height: 40px; }
.ic-filter { width: 34px; height: 26px; }
.ic-export { width: 44px; height: 42px; }
.ic-view { width: 46px; height: 34px; }

.threshold {
    width: 371px;
    padding-left: 19px;
    display: flex;
    flex-direction: column;
    flex: none;
}

.threshold-top {
    height: 66px;
    display: flex;
    align-items: center;
    padding-top: 4px;
}

.slider {
    width: 240px;
    display: flex;
    align-items: flex-start;
}

.slider-thumb {
    width: 22px;
    height: 36px;
}

.slider-track {
    flex: 1;
    height: 20px;
    margin-top: 8px;
    background: #cfcfcf;
}

.threshold-input {
    width: 59px;
    height: 40px;
    margin-left: 24px;
    background: #fff;
    border: 2px solid #c4c4c4;
    border-bottom-color: #555;
    text-align: right;
    padding-right: 8px;
    line-height: 36px;
    font-size: 22px;
}

.threshold-label {
    margin-left: 121px;
    line-height: 28px;
}

.wordlist {
    width: 433px;
    flex: none;
    display: flex;
    flex-direction: column;
}

.wordlist-top {
    height: 66px;
    display: flex;
    align-items: center;
    padding-top: 4px;
}

.exclude {
    margin-left: 30px;
    width: 138px;
    font-size: 24.500px;
}

.exclude-caret {
    margin-top: 8px;
}

.lang-select {
    width: 199px;
    height: 41px;
    margin-left: 38px;
    background: #fff;
    border: 2px solid #6b6b6b;
    display: flex;
    align-items: center;
    justify-content: space-between;
    padding: 0 9px 0 10px;
    color: #222;
    font-size: 23.500px;
}

.wordlist-label {
    margin-left: 175px;
    line-height: 34px;
}

/* document list */
.content {
    flex: 1;
    min-height: 0;
    display: flex;
    background: #fff;
}

.scope-col {
    width: 439px;
    flex: none;
    padding: 13px 7px 0 12px;
    border-right: 2px solid #bdbdbd;
}

.scope-select {
    height: 48px;
    border: 2px solid #6b6b6b;
    display: flex;
    align-items: center;
    justify-content: space-between;
    padding: 0 10px 0 12px;
    font-size: 22px;
}

.scope-search {
    height: 43px;
    margin-top: 30px;
    padding: 0 7px 0 9px;
}

.list-head {
    height: 42px;
    margin-top: 9px;
    border-top: 2px solid #bdbdbd;
    border-bottom: 2px solid #bdbdbd;
    display: flex;
}

.list-head-check {
    width: 69px;
    padding-left: 19px;
    display: flex;
    align-items: center;
    border-right: 2px solid #bdbdbd;
}

.list-head-name {
    flex: 1;
    margin-right: 7px;
    padding: 0 17px 0 10px;
    display: flex;
    align-items: center;
    justify-content: space-between;
    border-right: 2px solid #bdbdbd;
    font-size: 23px;
}

.sort-up {
    width: 22px;
    height: 12px;
}

.check {
    width: 26px;
    height: 26px;
    border: 2px solid #666;
    background: #fff;
    display: block;
    flex: none;
}

.is-checked svg {
    width: 16px;
    height: 18px;
    margin: 2px 0 0 3px;
}

.doc-list {
    height: 813px;
    margin-top: 3px;
    overflow: hidden;
}

.doc-row {
    height: 52px;
    margin-bottom: 8px;
    padding-left: 19px;
    display: flex;
    align-items: center;
    font-size: 23px;
    white-space: nowrap;
    color: #444;
}

.doc-row .ic-pdf,
.doc-row .ic-text {
    margin-left: 46px;
    margin-right: 10px;
}

.doc-row .ic-pdf {
    margin-right: 5px;
}

/* word cloud */
.cloud {
    flex: 1;
    position: relative;
    overflow: hidden;
    background: #fff;
    font-family: "DejaVu Sans", Verdana, sans-serif;
}

.word {
    position: absolute;
    line-height: 0;
    white-space: nowrap;
    font-size: 100px;
}
```
FILE: cloud.js
```js
// text, left, right, baseline (page px), colour
const words = [
    ['attitude', 1913, 2040, 467, '#3f5aa0'], ['key', 1439, 1496, 517, '#5f77b0'],
    ['home', 1543, 1645, 523, '#54397f'], ['analysis', 1678, 1826, 504, '#3f5aa0'],
    ['diverences', 1850, 2054, 525, '#5f7ab0'], ['use', 2085, 2143, 506, '#b08860'],
    ['may', 2191, 2266, 510, '#7a5ca8'], ['daily', 2284, 2358, 516, '#4d5266'],
    ['used', 1292, 1370, 568, '#888a94'], ['towards', 1399, 1543, 582, '#5a9cb0'],
    ['less', 1618, 1688, 582, '#a07cd0'], ['journal', 1706, 1853, 612, '#3a55a0'],
    ['policy', 1898, 2017, 617, '#52348a'], ['everyday', 2096, 2273, 583, '#7a5ca8'],
    ['within', 2307, 2415, 576, '#4f8c78'], ['belief', 2474, 2567, 614, '#4d5266'],
    ['w10', 1192, 1257, 631, '#4d5266'], ['means', 1281, 1399, 640, '#3f5aa0'],
    ['activities', 1453, 1628, 648, '#4d5266'], ['environmentalists', 2041, 2432, 651, '#888a9c'],
    ['attitudes', 1648, 1842, 685, '#c8807a'], ['groups', 1865, 2015, 683, '#1f2f70'],
    ['personal', 1101, 1253, 688, '#3f5aa0'], ['lifestyle', 1269, 1418, 708, '#a06c3c'],
    ['change', 1463, 1618, 714, '#52348a'], ['can', 2043, 2118, 728, '#7a5ca8'],
    ['individuals', 2175, 2421, 732, '#7a4a20'], ['us', 2436, 2471, 706, '#2f6f58'],
    ['two', 2483, 2551, 688, '#b86a68'], ['self', 2583, 2645, 689, '#4d5266'],
    ['water', 2436, 2544, 762, '#2f6f58'], ['role', 2559, 2627, 762, '#5f77b0'],
    ['act', 2660, 2709, 752, '#b08860'], ['clearly', 1070, 1184, 769, '#888a94'],
    ['energy', 1209, 1341, 793, '#a8aab8'], ['information', 1357, 1608, 786, '#5f7ab0'],
    ['action', 1626, 1825, 818, '#4f8c78'], ['behaviour', 1846, 2202, 827, '#a8aab8'],
    ['al', 2231, 2265, 813, '#5a9cb0'], ['data', 2280, 2380, 823, '#a06c3c'],
    ['paper', 2471, 2583, 827, '#a06c3c'], ['value', 2610, 2710, 828, '#5a9cb0'],
    ['given', 1038, 1129, 847, '#7a5ca8'], ['de', 1390, 1427, 840, '#7a5ca8'],
    ['committed', 1150, 1369, 868, '#22376f'], ['non', 2385, 2453, 898, '#5a9cb0'],
    ['speciwc', 2473, 2628, 903, '#6aa890'], ['will', 2655, 2711, 893, '#a8aab8'],
    ['three', 1044, 1134, 944, '#a06c3c'], ['actions', 1150, 1288, 937, '#b08860'],
    ['range', 1312, 1427, 952, '#22376f'], ['environmental', 1447, 2359, 986, '#85423a'],
    ['relates', 1040, 1160, 1016, '#c8807a'], ['diverent', 1188, 1357, 1015, '#7a4a20'],
    ['tal', 1386, 1424, 1007, '#4d5266'], ['practices', 2387, 2567, 971, '#888a9c'],
    ['issues', 2599, 2711, 966, '#c8807a'], ['four', 1094, 1164, 1080, '#6f3a38'],
    ['pro', 1184, 1247, 1076, '#2f6f58'], ['barr', 1309, 1391, 1082, '#85423a'],
    ['factor', 1452, 1593, 1086, '#3f7a9c'], ['social', 1636, 1824, 1098, '#5a3c90'],
    ['et', 1863, 1904, 1071, '#3f5aa0'], ['cluster', 1969, 2111, 1070, '#5f7ab0'],
    ['table', 2128, 2224, 1069, '#5a9cb0'], ['british', 2256, 2352, 1056, '#2f6f58'],
    ['sustainable', 2408, 2642, 1041, '#85423a'], ['cases', 2662, 2757, 1031, '#2f5a78'],
    ['fig', 1116, 1156, 1144, '#5a9cb0'], ['nature', 1174, 1295, 1152, '#7a4a20'],
    ['gilg', 1320, 1389, 1154, '#a8aab8'], ['envi', 1406, 1478, 1160, '#5f7ab0'],
    ['values', 1842, 2011, 1148, '#52348a'], ['research', 2031, 2251, 1143, '#5a3c90'],
    ['recycling', 2281, 2471, 1118, '#6aa890'], ['local', 2651, 2729, 1102, '#a07cd0'],
    ['waste', 2526, 2634, 1141, '#2f5a78'], ['w2', 2651, 2694, 1168, '#2f6f58'],
    ['behavioural', 1494, 1780, 1181, '#6aa890'], ['problems', 1132, 1298, 1212, '#3f5aa0'],
    ['around', 1340, 1473, 1225, '#a07cd0'], ['also', 1498, 1574, 1242, '#a06c3c'],
    ['factors', 1602, 1749, 1251, '#a07cd0'], ['environment', 1807, 2119, 1233, '#4f8c78'],
    ['approach', 2159, 2348, 1232, '#4d5266'], ['life', 2365, 2416, 1204, '#c8807a'],
    ['related', 2473, 2604, 1207, '#2f5a78'], ['psychology', 2379, 2590, 1283, '#888a94'],
    ['con', 1254, 1312, 1277, '#52348a'], ['using', 1337, 1432, 1291, '#7a4a20'],
    ['behaviours', 1483, 1697, 1320, '#3f7a9c'], ['signiwcant', 1720, 1941, 1313, '#4f8c78'],
    ['items', 1966, 2076, 1305, '#22376f'], ['work', 2095, 2187, 1307, '#b86a68'],
    ['provide', 2205, 2345, 1327, '#52348a'], ['w1', 2384, 2426, 1340, '#22376f'],
    ['part', 1394, 1464, 1347, '#a07cd0'], ['lifestyles', 1549, 1715, 1378, '#22376f'],
    ['geoforum', 1737, 1917, 1377, '#3f5aa0'], ['green', 1950, 2057, 1379, '#7a4a20'],
    ['new', 2104, 2178, 1377, '#6aa890'], ['ways', 2192, 2278, 1393, '#a06c3c'],
    ['generally', 1742, 1885, 1428, '#b08860']
];

const cloud = document.getElementById('cloud');
const origin = cloud.getBoundingClientRect();

// sizes come from the ink width: advance minus about .11em of side bearing.
// baseline sits .346em under the middle of a zero-height DejaVu line
for (const [text, left, right, baseline, color] of words) {
    const el = document.createElement('span');
    el.className = 'word';
    el.textContent = text;
    el.style.color = color;
    cloud.appendChild(el);

    const advance = el.getBoundingClientRect().width / 100;
    const size = (right - left) / (advance - 0.11);
    el.style.fontSize = size + 'px';
    el.style.left = (left - origin.left - size * 0.055) + 'px';
    el.style.top = (baseline - origin.top - size * 0.346) + 'px';
}
```
